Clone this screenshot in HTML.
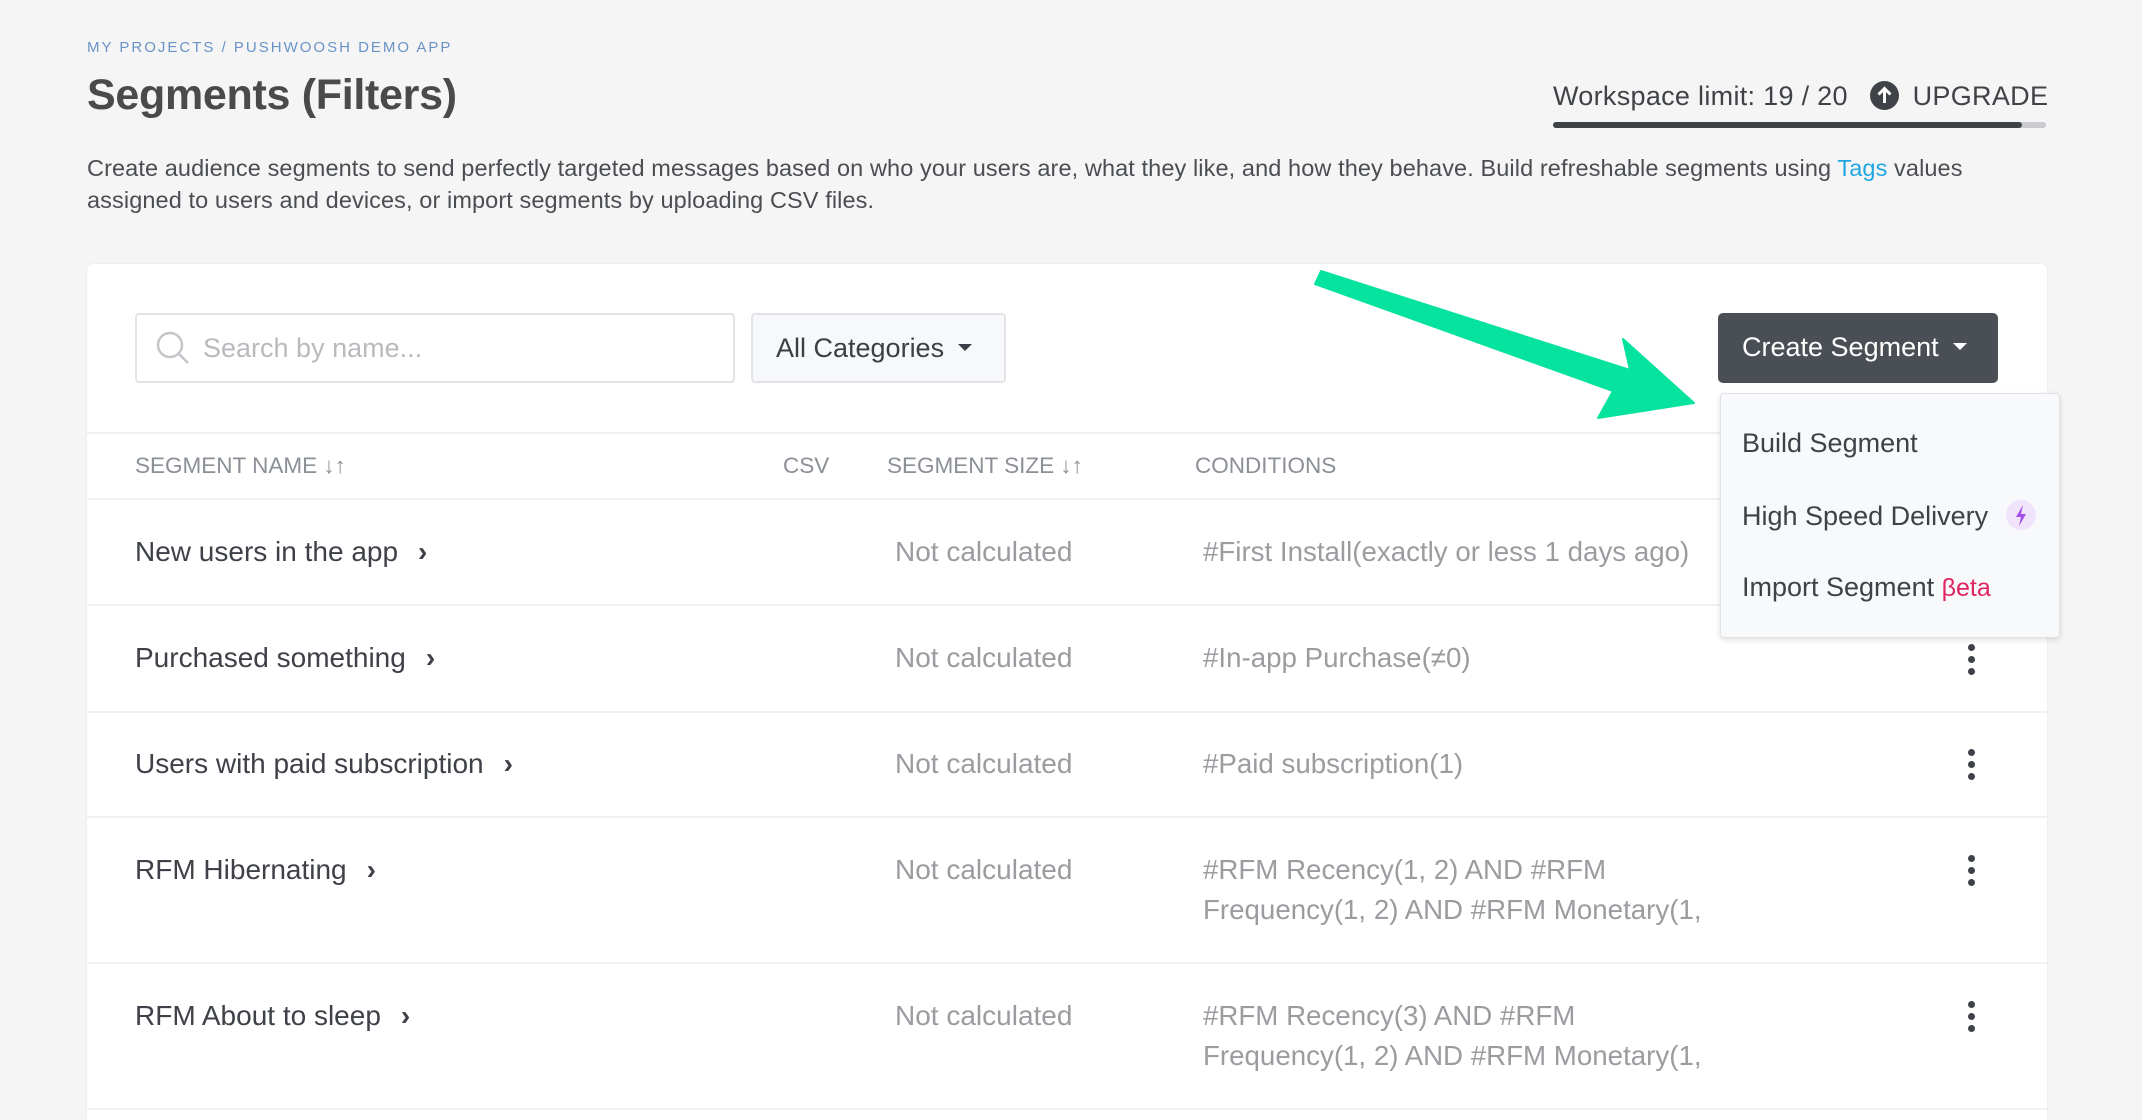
<!DOCTYPE html>
<html><head><meta charset="utf-8"><style>
*{margin:0;padding:0;box-sizing:border-box}
html{overflow:hidden;width:2142px;height:1120px}
body{width:2142px;height:1120px;background:#f5f5f5;font-family:"Liberation Sans",Arial,sans-serif;position:relative;overflow:hidden;color:#45484d}
.a{position:absolute;white-space:nowrap}
.bc{left:87px;top:39px;font-size:15px;letter-spacing:2px;color:#6a93c6}
.title{left:87px;top:71px;font-size:43px;font-weight:bold;color:#4a4a4a;letter-spacing:-0.3px}
.desc{left:87px;top:152px;font-size:23.5px;line-height:32px;color:#4a4d52;white-space:normal;width:1900px;letter-spacing:0.1px}
.desc span{color:#1fa6e0}
.ws{left:1553px;top:81px;font-size:27px;color:#3f4247;letter-spacing:0.3px}
.card{position:absolute;left:87px;top:264px;width:1960px;height:856px;background:#fff;border-radius:6px 6px 0 0;box-shadow:0 0 2px rgba(0,0,0,.08)}
.inp{left:135px;top:313px;width:600px;height:70px;border:2px solid #e1e3e6;border-radius:4px;background:#fff}
.cat{left:751px;top:313px;width:255px;height:70px;border:2px solid #e1e3e6;border-radius:4px;background:#f7f8fa;font-size:27px;color:#3b3e44;padding:18px 0 0 23px}
.btn{left:1718px;top:313px;width:280px;height:70px;border-radius:5px;background:#4a4e55;color:#fff;font-size:27px;padding:19px 0 0 24px}
.tri{display:inline-block;width:0;height:0;border-left:7px solid transparent;border-right:7px solid transparent;border-top:7px solid currentColor;vertical-align:middle;margin-left:14px;margin-top:-4px}
.hl{position:absolute;left:87px;width:1960px;height:2px;background:#eef0f2}
.th{font-size:22.5px;color:#8b8f96;top:453px}
.nm{font-size:28px;color:#3e4147;left:135px}
.nc{font-size:28px;color:#9a9ca0;left:895px}
.cd{font-size:27.7px;color:#9a9ca0;left:1203px;line-height:40px}
.chev{margin-left:20px;font-size:28px;font-weight:bold}
.keb{left:1968px;width:12px}
.keb i{display:block;width:7px;height:7px;border-radius:50%;background:#3e4147;margin:0 0 5px 0}
.menu{left:1720px;top:393px;width:340px;height:245px;background:#f8f9fb;border:1px solid #e0e2e6;border-radius:4px;box-shadow:0 2px 6px rgba(0,0,0,.12)}
.mi{font-size:27px;color:#3e4147;left:1742px}
</style></head><body>
<div class="a bc">MY PROJECTS / PUSHWOOSH DEMO APP</div>
<div class="a title">Segments (Filters)</div>
<div class="a ws">Workspace limit: 19 / 20 <span style="display:inline-block;width:29px;height:29px;border-radius:50%;background:#3f4247;vertical-align:-5px;margin:0 14px 0 14px;position:relative"><svg width="29" height="29" viewBox="0 0 29 29" style="position:absolute;left:0;top:0"><path d="M14.5 22V8M8.5 13.5l6-6 6 6" stroke="#fff" stroke-width="3" fill="none"/></svg></span>UPGRADE</div>
<div class="a" style="left:1553px;top:122px;width:493px;height:6px;background:#c9cbcf;border-radius:3px"></div>
<div class="a" style="left:1553px;top:122px;width:469px;height:6px;background:#3f4247;border-radius:3px"></div>
<div class="a desc">Create audience segments to send perfectly targeted messages based on who your users are, what they like, and how they behave. Build refreshable segments using <span>Tags</span> values assigned to users and devices, or import segments by uploading CSV files.</div>
<div class="card"></div>
<div class="a inp"><svg width="40" height="40" viewBox="0 0 40 40" style="position:absolute;left:16px;top:13px"><circle cx="17" cy="17" r="12" stroke="#c4c6ca" stroke-width="2.5" fill="none"/><path d="M26 26l9 9" stroke="#c4c6ca" stroke-width="2.5"/></svg><span style="position:absolute;left:66px;top:18px;font-size:27px;color:#b8babe">Search by name...</span></div>
<div class="a cat">All Categories<span class="tri"></span></div>
<div class="a btn">Create Segment<span class="tri"></span></div>
<div class="hl" style="top:432px"></div>
<div class="hl" style="top:498px"></div>
<div class="a th" style="left:135px">SEGMENT NAME ↓↑</div>
<div class="a th" style="left:783px">CSV</div>
<div class="a th" style="left:887px">SEGMENT SIZE ↓↑</div>
<div class="a th" style="left:1195px">CONDITIONS</div>

<div class="a nm" style="top:536px">New users in the app<span class="chev">›</span></div>
<div class="a nc" style="top:536px">Not calculated</div>
<div class="a cd" style="top:532px">#First Install(exactly or less 1 days ago)</div>
<div class="hl" style="top:604px"></div>

<div class="a nm" style="top:642px">Purchased something<span class="chev">›</span></div>
<div class="a nc" style="top:642px">Not calculated</div>
<div class="a cd" style="top:638px">#In-app Purchase(≠0)</div>
<div class="a keb" style="top:644px"><i></i><i></i><i></i></div>
<div class="hl" style="top:711px"></div>

<div class="a nm" style="top:748px">Users with paid subscription<span class="chev">›</span></div>
<div class="a nc" style="top:748px">Not calculated</div>
<div class="a cd" style="top:744px">#Paid subscription(1)</div>
<div class="a keb" style="top:749px"><i></i><i></i><i></i></div>
<div class="hl" style="top:816px"></div>

<div class="a nm" style="top:854px">RFM Hibernating<span class="chev">›</span></div>
<div class="a nc" style="top:854px">Not calculated</div>
<div class="a cd" style="top:850px">#RFM Recency(1, 2) AND #RFM<br>Frequency(1, 2) AND #RFM Monetary(1,</div>
<div class="a keb" style="top:855px"><i></i><i></i><i></i></div>
<div class="hl" style="top:962px"></div>

<div class="a nm" style="top:1000px">RFM About to sleep<span class="chev">›</span></div>
<div class="a nc" style="top:1000px">Not calculated</div>
<div class="a cd" style="top:996px">#RFM Recency(3) AND #RFM<br>Frequency(1, 2) AND #RFM Monetary(1,</div>
<div class="a keb" style="top:1001px"><i></i><i></i><i></i></div>
<div class="hl" style="top:1108px"></div>

<div class="a menu"></div>
<div class="a mi" style="top:428px">Build Segment</div>
<div class="a mi" style="top:500px">High Speed Delivery <span style="display:inline-block;width:30px;height:30px;border-radius:50%;background:#efe4fb;vertical-align:-5px;margin-left:10px;position:relative"><svg width="30" height="30" viewBox="0 0 30 30" style="position:absolute;left:0;top:0"><path d="M17 5L10 17h5l-2 9 7-12h-5z" fill="#a54ee8"/></svg></span></div>
<div class="a mi" style="top:572px">Import Segment <span style="color:#e0245e;font-size:25px">βeta</span></div>

<svg class="a" style="left:0;top:0" width="2142" height="1120"><polygon points="1321,271 1630,370 1623,339 1694,403 1598,418 1613,391 1315,284" fill="#05e39e" stroke="#05e39e" stroke-width="2" stroke-linejoin="round"/></svg>
</body></html>
